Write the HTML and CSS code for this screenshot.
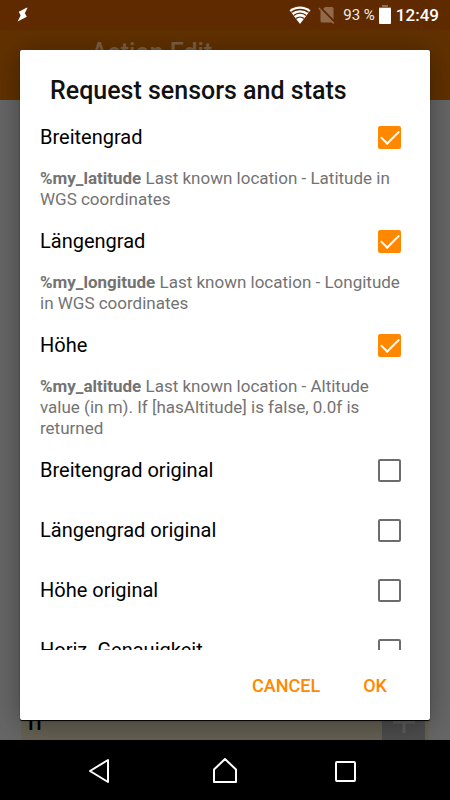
FILE: index.html
```html
<!DOCTYPE html>
<html lang="de">
<head>
<meta charset="utf-8">
<meta name="viewport" content="width=device-width, initial-scale=1">
<title>Request sensors and stats</title>
<link rel="stylesheet" href="styles.css">
</head>
<body>
<header class="status">
  <svg class="status-bolt" width="12" height="16" viewBox="0 0 12 16" aria-hidden="true"><path d="M9.500 .8 1.800 4.800 3.600 8.600 .6 14.400 9.800 9.800 7.800 6.200 10.600 .8Z" fill="#fff"/></svg>
  <svg class="status-wifi" width="22" height="20" viewBox="0 0 22 20" aria-hidden="true">
    <path d="M11 19 .5 5.2C6.500 .3 15.500 .3 21.500 5.200Z" fill="#fff"/>
    <path d="M2.300 7.500C7.200 3.500 14.800 3.500 19.700 7.500M4.700 10.600C8.300 7.400 13.700 7.400 17.300 10.600M7 13.600C9.300 11.500 12.700 11.500 15 13.600" fill="none" stroke="#5f2a00" stroke-width="1.300"/>
  </svg>
  <svg class="status-sim" width="18" height="18" viewBox="0 0 18 18" aria-hidden="true">
    <path d="M7 1H14Q15.500 1 15.500 2.500V15Q15.500 16.500 14 16.500H4Q2.500 16.500 2.500 15V5.500Z" fill="#916a4d"/>
    <path d="M2.500 1.500 17.500 17" stroke="#5f2a00" stroke-width="2"/>
    <path d="M.8 2 15.800 17.500" stroke="#916a4d" stroke-width="1.500"/>
  </svg>
  <span class="status-level">93 %</span>
  <svg class="status-battery" width="12" height="20" viewBox="0 0 12 20" aria-hidden="true"><path d="M3 0H9V2H12V4H0V2H3Z" fill="#916a4d"/><rect y="3" width="12" height="16" rx="1" fill="#fff"/></svg>
  <time class="status-time">12:49</time>
</header>

<main class="screen">
  <div class="app">
    <div class="app-bar">Action Edit</div>
    <div class="app-body"></div>
    <div class="app-footer">
      <span class="app-if">If</span>
      <span class="app-add"><svg width="24" height="24" viewBox="0 0 24 24" aria-hidden="true"><path d="M12 1V23M1 12H23" stroke="#5e5e5e" stroke-width="3"/></svg></span>
    </div>
  </div>

  <div class="overlay">
    <form class="dialog" role="dialog" aria-labelledby="title">
      <h1 class="dialog-title" id="title">Request sensors and stats</h1>
      <div class="options">
        <label class="option">Breitengrad<input class="check" type="checkbox" checked></label>
        <p class="note"><b>%my_latitude</b> Last known location - Latitude in WGS coordinates</p>
        <label class="option">Längengrad<input class="check" type="checkbox" checked></label>
        <p class="note"><b>%my_longitude</b> Last known location - Longitude in WGS coordinates</p>
        <label class="option">Höhe<input class="check" type="checkbox" checked></label>
        <p class="note"><b>%my_altitude</b> Last known location - Altitude value (in m). If [hasAltitude] is false, 0.0f is returned</p>
        <label class="option">Breitengrad original<input class="check" type="checkbox"></label>
        <label class="option">Längengrad original<input class="check" type="checkbox"></label>
        <label class="option">Höhe original<input class="check" type="checkbox"></label>
        <label class="option">Horiz. Genauigkeit<input class="check" type="checkbox"></label>
      </div>
      <div class="actions">
        <button class="action" type="button">CANCEL</button>
        <button class="action" type="button">OK</button>
      </div>
    </form>
  </div>
</main>

<nav class="nav">
  <button class="nav-button" type="button" aria-label="Back"><svg width="26" height="28" viewBox="0 0 26 28"><path d="M18 4V26L0 15Z" fill="none" stroke="#fff" stroke-width="2" stroke-linejoin="round"/></svg></button>
  <button class="nav-button" type="button" aria-label="Home"><svg width="26" height="28" viewBox="0 0 26 28"><path d="M13 3 24 13.500V26H2V13.500Z" fill="none" stroke="#fff" stroke-width="2" stroke-linejoin="round"/></svg></button>
  <button class="nav-button" type="button" aria-label="Recent apps"><svg width="26" height="28" viewBox="0 0 26 28"><rect x="2" y="6" width="19" height="19" rx="1" fill="none" stroke="#fff" stroke-width="2"/></svg></button>
</nav>
</body>
</html>
```
FILE: styles.css
```css
* {
  box-sizing: border-box;
}

body {
  margin: 0;
  height: 100vh;
  display: grid;
  grid-template-rows: 30px minmax(0, 1fr) 60px;
  font-family: Roboto, "Liberation Sans", sans-serif;
  background: #000;
  overflow: hidden;
}

button {
  font: inherit;
  border: 0;
  background: none;
  padding: 0;
}

.status {
  display: flex;
  align-items: center;
  padding: 0 11px 0 17px;
  background: #5f2a00;
  color: #fff;
}

.status-wifi {
  margin-left: auto;
}

.status-sim {
  margin-left: 7px;
}

.status-level {
  margin-left: 7px;
  font-size: 15px;
  color: #f3ece8;
}

.status-battery {
  margin: 0 5px 0 4px;
}

.status-time {
  font-size: 17px;
  font-weight: 500;
}

.screen {
  display: grid;
  grid-template: minmax(0, 1fr) / minmax(0, 1fr);
  overflow: hidden;
}

.app,
.overlay {
  grid-area: 1 / 1;
}

.app {
  display: flex;
  flex-direction: column;
  background: #666;
}

.app-bar {
  height: 70px;
  padding: 9px 0 0 91px;
  background: #613100;
  color: #7a6046;
  font-size: 25px;
  line-height: 28px;
  font-weight: 500;
}

.app-body {
  flex: 1;
}

.app-footer {
  display: flex;
  justify-content: space-between;
  height: 36px;
  margin: 0 21px;
  padding-right: 4px;
  background: #666154;
}

.app-if {
  padding: 3px 0 0 6px;
  font-size: 28px;
  line-height: 28px;
}

.app-add {
  display: grid;
  place-items: center;
  width: 43px;
  background: #4d4d4d;
}

.overlay {
  z-index: 1;
  display: flex;
  padding: 20px;
}

.dialog {
  flex: 1;
  min-width: 0;
  display: flex;
  flex-direction: column;
  border-radius: 2px;
  background: #fff;
  box-shadow: 0 1px 1px #000, 0 4px 28px rgba(0, 0, 0, 0.35);
}

.dialog-title {
  margin: 0;
  padding: 26px 30px 0;
  height: 57px;
  font-size: 25px;
  line-height: 30px;
  font-weight: 500;
  color: #111;
}

.options {
  flex: 1;
  min-height: 0;
  overflow: hidden;
}

.option {
  display: flex;
  align-items: center;
  justify-content: space-between;
  height: 60px;
  padding: 0 29px 0 20px;
  font-size: 20px;
  color: #000;
}

.check {
  appearance: none;
  width: 23px;
  height: 23px;
  margin: 0;
  border: 2px solid #6c6c6c;
  border-radius: 2px;
}

.check:checked {
  display: grid;
  place-items: center;
  border-color: #ff8800;
  background: #ff8800;
}

.check:checked::before {
  content: "";
  width: 16px;
  height: 8px;
  margin-top: -4px;
  border: solid #fff;
  border-width: 0 0 2px 2px;
  transform: rotate(-45deg);
}

.note {
  margin: 0;
  padding: 1px 20px;
  font-size: 17px;
  line-height: 21px;
  color: #737373;
}

.actions {
  display: flex;
  justify-content: flex-end;
  gap: 43px;
  height: 70px;
  padding-right: 43px;
}

.action {
  font-size: 18px;
  font-weight: 500;
  color: #ff8800;
}

.nav {
  display: flex;
  justify-content: center;
  align-items: center;
  gap: 96px;
  background: #000;
}

.nav-button {
  display: grid;
}

.nav-button svg {
  overflow: visible;
}
```
